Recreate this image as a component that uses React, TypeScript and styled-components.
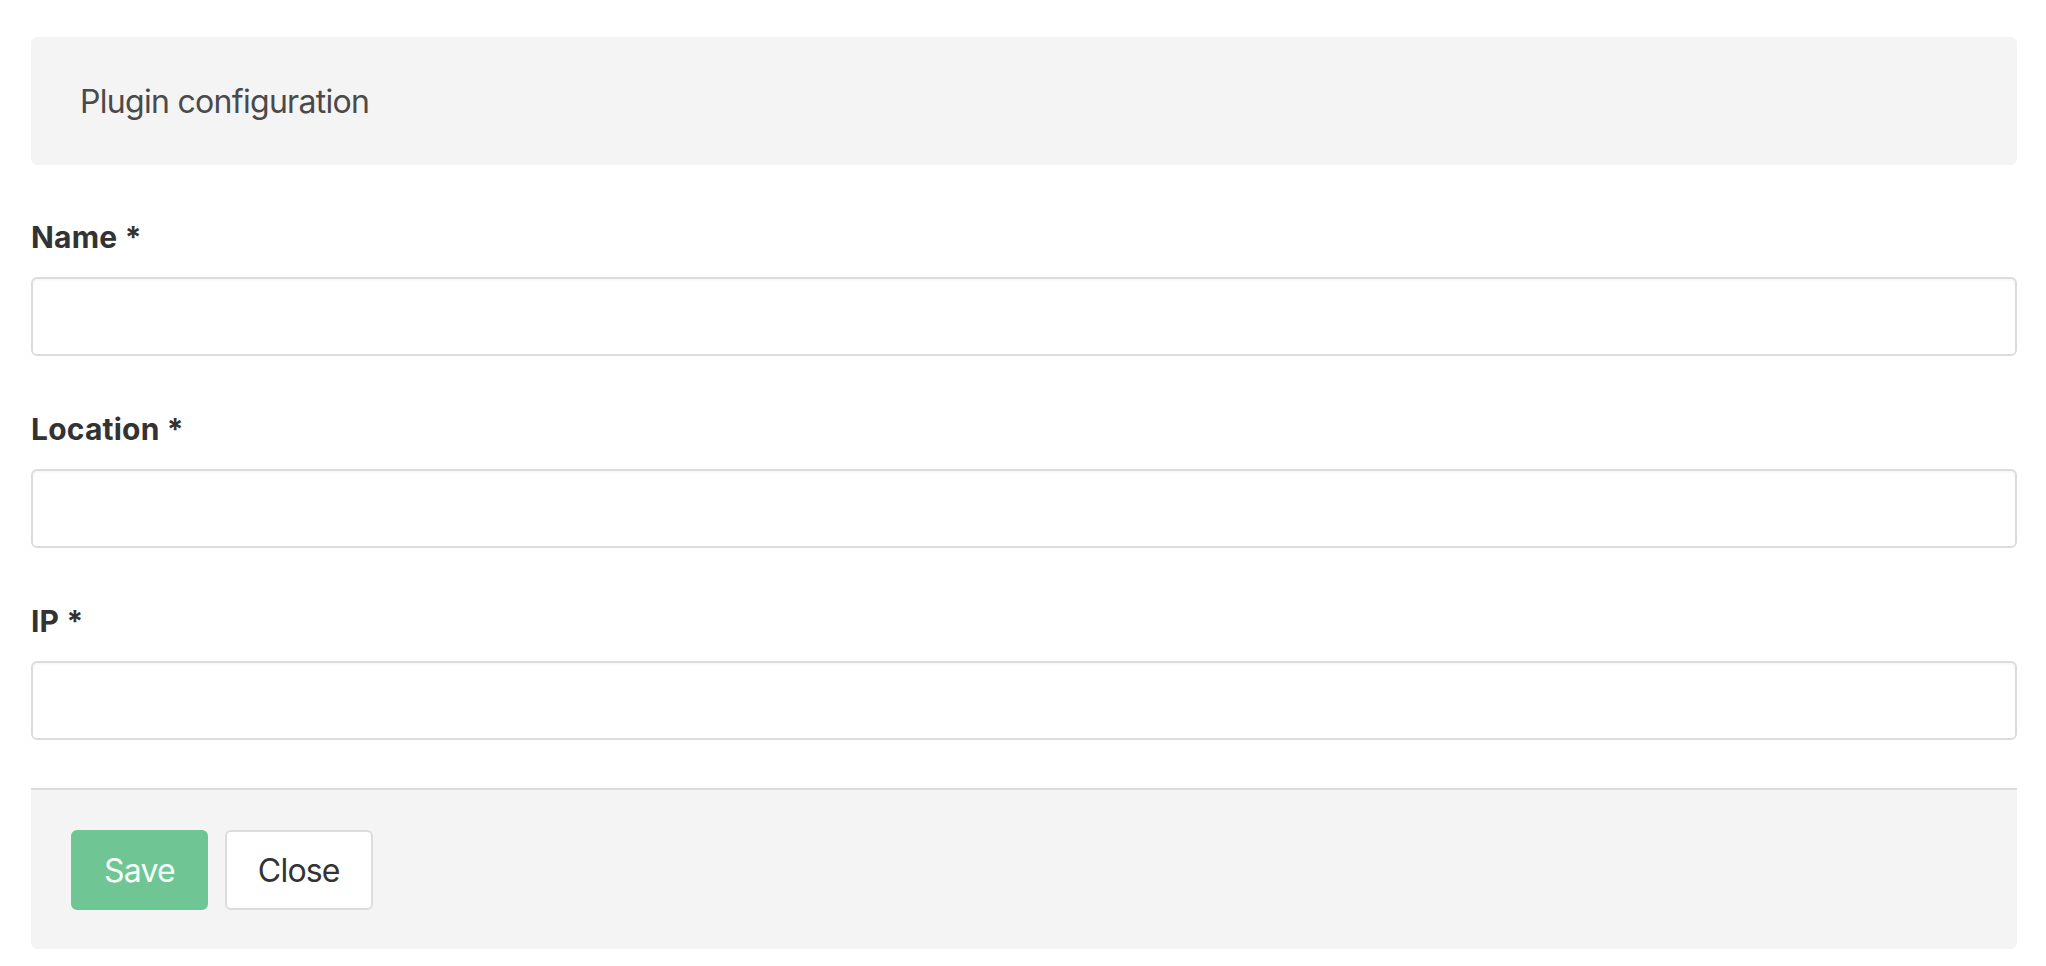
import React from "react";
import styled, { createGlobalStyle } from "styled-components";

const GlobalStyle = createGlobalStyle`
  html, body {
    margin: 0;
    padding: 0;
    background: #ffffff;
  }

  body {
    font-family: Inter, "Open Sans", "Liberation Sans", sans-serif;
    color: #333333;
  }

  * {
    box-sizing: border-box;
  }
`;

const Page = styled.div`
  padding: 37px 29px 16px 31px;
`;

const Header = styled.div`
  display: flex;
  align-items: center;
  height: 128px;
  padding: 0 49px;
  background: #f4f4f4;
  border-radius: 6px;
  font-size: 32px;
  letter-spacing: -0.7px;
  color: #4a4a4a;
`;

const Form = styled.form`
  display: flex;
  flex-direction: column;
  padding-top: 54px;
`;

const Field = styled.div`
  display: flex;
  flex-direction: column;
  gap: 22px;

  & + & {
    margin-top: 55px;
  }
`;

const Label = styled.label`
  font-size: 30px;
  line-height: 36px;
  font-weight: 700;
  letter-spacing: 0.2px;
  color: #333333;
`;

const Input = styled.input`
  width: 100%;
  height: 79px;
  padding: 0 24px;
  border: 2px solid #dcdcdc;
  border-radius: 6px;
  background: #ffffff;
  box-shadow: inset 0 2px 2px rgba(0, 0, 0, 0.03);
  font-family: inherit;
  font-size: 30px;
  color: #333333;
  outline: none;
`;

const Footer = styled.div`
  display: flex;
  gap: 17px;
  margin-top: 48px;
  padding: 40px 40px 39px;
  background: #f4f4f4;
  border-top: 2px solid #dcdcdc;
  border-radius: 0 0 6px 6px;
`;

const Button = styled.button<{ primary?: boolean }>`
  height: 80px;
  padding: 0 31px;
  border: 2px solid ${({ primary }) => (primary ? "#6fc593" : "#dcdcdc")};
  border-radius: 6px;
  background: ${({ primary }) => (primary ? "#6fc593" : "#ffffff")};
  color: ${({ primary }) => (primary ? "#f4fff8" : "#333333")};
  font-family: inherit;
  font-size: 32px;
  font-weight: 400;
  letter-spacing: -0.8px;
  cursor: pointer;
`;

const fields = [
  { id: "name", label: "Name *" },
  { id: "location", label: "Location *" },
  { id: "ip", label: "IP *" },
];

export default function App() {
  return (
    <>
      <GlobalStyle />
      <Page>
        <Header>Plugin configuration</Header>
        <Form onSubmit={(e) => e.preventDefault()}>
          {fields.map((f) => (
            <Field key={f.id}>
              <Label htmlFor={f.id}>{f.label}</Label>
              <Input id={f.id} type="text" />
            </Field>
          ))}
          <Footer>
            <Button primary type="submit">
              Save
            </Button>
            <Button type="button">Close</Button>
          </Footer>
        </Form>
      </Page>
    </>
  );
}
